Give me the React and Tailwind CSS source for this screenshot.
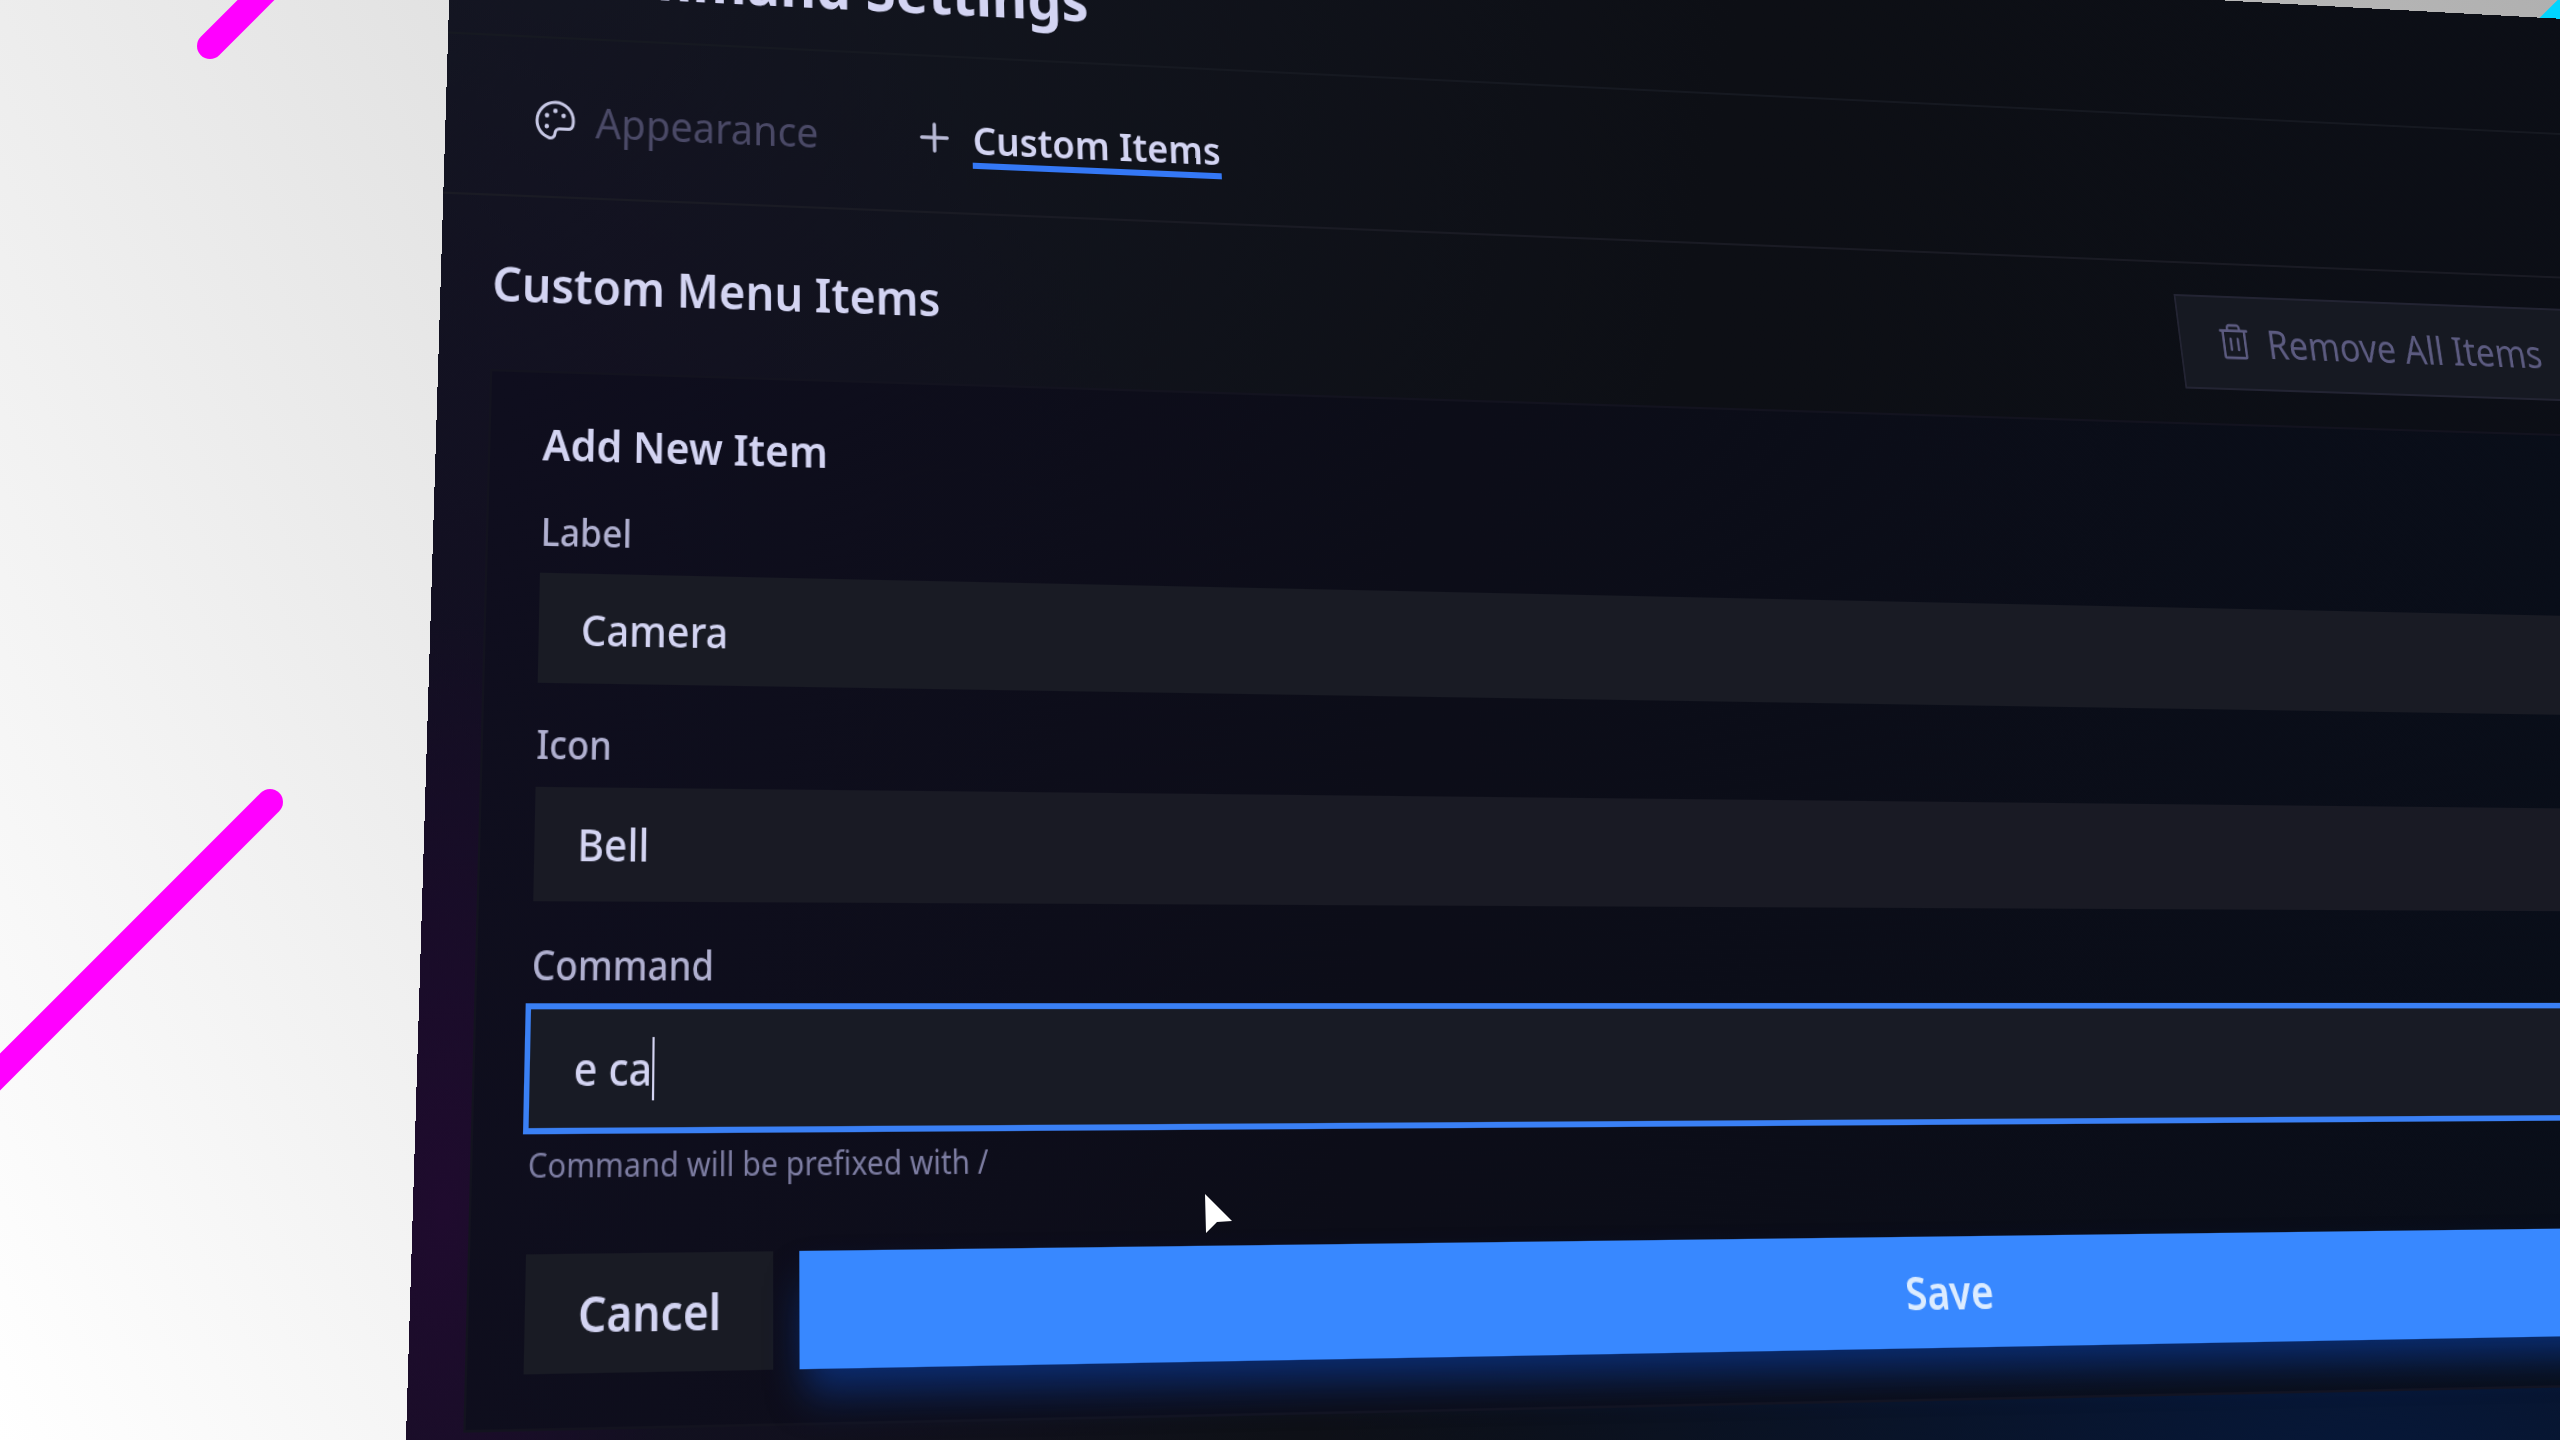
import React, { useState } from "react";
import { PiPalette, PiPlusBold, PiTrash } from "react-icons/pi";

const Field = ({ id, label, children }) => (
  <div>
    <label htmlFor={id} className="mb-[11px] block text-[34px] leading-[52px] font-medium text-[#b0b0d0]">
      {label}
    </label>
    {children}
  </div>
);

const App = () => {
  const [label, setLabel] = useState("Camera");
  const [icon, setIcon] = useState("Bell");
  const [command, setCommand] = useState("e ca");

  return (
    <div className="relative h-screen w-full overflow-hidden bg-[linear-gradient(62deg,#ffffff_0%,#b0b0b0_100%)] font-['Noto_Sans','Open_Sans',sans-serif]">
      {/* Background strokes */}
      <svg className="absolute inset-0 h-full w-full" strokeLinecap="round" strokeWidth="26" aria-hidden="true">
        <line x1="210" y1="46" x2="310" y2="-54" stroke="#ff00ff" />
        <line x1="270" y1="802" x2="-40" y2="1112" stroke="#ff00ff" />
        <line x1="2520" y1="56" x2="2620" y2="-44" stroke="#00d5ff" />
      </svg>

      {/* Tilted settings window */}
      <main className="w-[105vw] origin-top-left [transform:matrix3d(1.02245,0.049667,0,0.000049667,-0.072614,1.009053,0,-0.000094304,0,0,1,0,452,-96,0,1)] bg-[#0c0f18] bg-[radial-gradient(ellipse_8%_34%_at_1%_80%,#1f0b2e_0%,transparent_100%),radial-gradient(ellipse_30%_70%_at_0%_65%,#120d22_0%,transparent_100%),radial-gradient(ellipse_at_70%_100%,#06183a_0%,transparent_40%),linear-gradient(105deg,#141722_0%,#0d0f15_45%,#0b0e17_100%)] pb-[120px] text-[#d3d4f2]">
        <header className="flex h-[128px] items-center border-b-2 border-[#161921] pl-[116px]">
          <h1 className="text-[57px] leading-[64px] font-bold">Command Settings</h1>
        </header>

        <nav className="flex h-[154px] items-center gap-[100px] border-b-2 border-[#1a1b24] pt-2 pl-[84px]">
          <button type="button" className="flex items-center gap-4">
            <PiPalette className="size-[48px] text-[#c6c7e4]" />
            <span className="text-[40px] leading-[48px] text-[#4a4966]">Appearance</span>
          </button>
          <button type="button" className="flex items-center gap-5">
            <PiPlusBold className="size-[38px] text-[#b9bad6]" />
            <span className="border-y-[6px] border-t-transparent border-b-[#3478f6] text-[38px] leading-[46px] font-semibold">
              Custom Items
            </span>
          </button>
        </nav>

        <section className="px-[50px] pt-8">
          <div className="mb-[34px] flex h-24 items-center justify-between">
            <h2 className="pt-1 text-[45px] leading-[56px] font-semibold">Custom Menu Items</h2>
            <button
              type="button"
              className="mr-[332px] flex h-full items-center gap-4 border-2 border-[#232433] bg-[#161922] px-10 text-[40px] text-[#5c5b80]"
            >
              <PiTrash className="size-[44px]" />
              Remove All Items
            </button>
          </div>

          <form
            className="border-2 border-[#13131f] bg-[linear-gradient(100deg,#0f0e1e_0%,#0c0d18_35%,#080e19_100%)] bg-[#0c0e1b] px-[50px] pt-[37px] pb-[42px]"
            onSubmit={(e) => e.preventDefault()}
          >
            <h3 className="mb-[25px] text-[40px] leading-[56px] font-semibold">Add New Item</h3>

            <div className="space-y-[27px]">
              <Field id="label" label="Label">
                <input
                  id="label"
                  type="text"
                  value={label}
                  onChange={(e) => setLabel(e.target.value)}
                  className="block h-[97px] w-full bg-[#191b24] px-10 text-[38px] font-medium outline-none"
                />
              </Field>

              <Field id="icon" label="Icon">
                <select
                  id="icon"
                  value={icon}
                  onChange={(e) => setIcon(e.target.value)}
                  className="block h-[97px] w-full appearance-none bg-[#191a24] px-10 text-[38px] font-medium outline-none"
                >
                  <option>Bell</option>
                </select>
              </Field>

              <Field id="command" label="Command">
                <div className="flex h-[97px] w-full items-center bg-[#181b25] px-10 text-[38px] font-medium ring-5 ring-[#3a80f5]">
                  <input
                    id="command"
                    type="text"
                    value={command}
                    onChange={(e) => setCommand(e.target.value)}
                    className="field-sizing-content bg-transparent outline-none"
                  />
                  <span className="h-[52px] w-[2px] bg-[#d3d4f2]" />
                </div>
                <p className="mt-[9px] text-[28px] leading-[40px] text-[#7d7da2]">Command will be prefixed with /</p>
              </Field>
            </div>

            <div className="mt-[52px] flex gap-6">
              <button type="button" className="h-[94px] w-[224px] bg-[#191b24] text-[40px] font-semibold">
                Cancel
              </button>
              <button
                type="submit"
                className="h-[94px] flex-1 bg-[#3888ff] text-[40px] font-semibold text-[#dcecff] shadow-[0_22px_34px_-6px_#0a44b4]/60"
              >
                Save
              </button>
            </div>
          </form>
        </section>
      </main>

      {/* Mouse pointer */}
      <svg className="absolute top-[1192px] left-[1203px] h-[44px] w-[32px]" viewBox="0 0 32 44" aria-hidden="true">
        <path d="M2 2 L29 29 L14 30 L3 41 Z" fill="#ffffff" />
      </svg>
    </div>
  );
};

export default App;
